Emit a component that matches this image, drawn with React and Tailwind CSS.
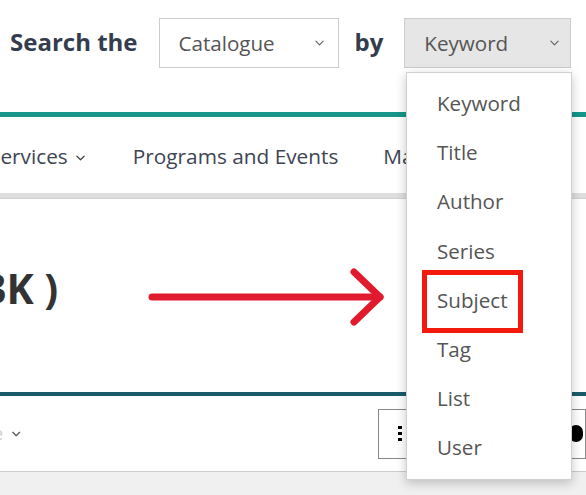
import React from 'react'

const Chevron = ({className = '', stroke = '#666', width = 1.3}) => (
    <svg className={className} viewBox="0 0 10 6" fill="none">
        <polyline points="1,1 5,5 9,1" stroke={stroke} strokeWidth={width} strokeLinecap="round" strokeLinejoin="round"/>
    </svg>
)

const options = ['Keyword', 'Title', 'Author', 'Series', 'Subject', 'Tag', 'List', 'User']

export default function App() {
    return (
        <div className="relative w-[586px] h-[495px] overflow-hidden bg-white font-['Open_Sans',sans-serif]">
            {/* Search header */}
            <div className="h-[112px] flex items-baseline pt-[18px]">
                <span className="ml-[10px] text-[24px] font-bold text-[#333d4e]">Search the</span>
                <div className="ml-[21px] w-[180px] h-[50px] border border-[#cccccc] bg-white flex items-center justify-between pl-[19px] pr-[14px] text-[20.6px] text-[#555555]">
                    <span>Catalogue</span>
                    <Chevron className="w-[9px] h-[6px]"/>
                </div>
                <span className="ml-[16px] text-[24px] font-bold text-[#333d4e]">by</span>
                <div className="ml-[21px] w-[167px] h-[50px] border border-[#cccccc] bg-[#e6e6e6] flex items-center justify-between pl-[19px] pr-[11px] text-[20.6px] text-[#555555]">
                    <span>Keyword</span>
                    <Chevron className="w-[9px] h-[6px]"/>
                </div>
            </div>

            <div className="h-[5px] bg-[#16958a]"></div>

            {/* Main nav */}
            <nav className="h-[76px] flex items-start pt-[25px] text-[20.8px] leading-[28px] text-[#3d4552] whitespace-nowrap">
                <span className="ml-[-11px]">Services</span>
                <Chevron className="ml-[8px] mt-[13px] w-[9px] h-[6px]" stroke="#444" width={1.4}/>
                <span className="ml-[48px]">Programs and Events</span>
                <span className="ml-[45px]">Makerspace</span>
            </nav>

            <div className="h-[6px] bg-[#dedede] border-b border-[#d2d2d2]"></div>

            {/* Results title */}
            <div className="h-[193px] pt-[61px]">
                <h1 className="ml-[-17px] text-[41px] leading-[56px] font-bold text-[#333333] whitespace-nowrap">3K )</h1>
            </div>

            <div className="h-[4px] bg-[#1b5b69]"></div>

            {/* Toolbar */}
            <div className="h-[76px] border-b border-[#cccccc] flex items-center">
                <span className="ml-[-7px] text-[18px] text-[#cfcfcf]">e</span>
                <Chevron className="ml-[9px] w-[12px] h-[8px]" stroke="#555" width={1.5}/>
                <div className="ml-[357px] w-[60px] h-[50px] border border-[#888888] flex flex-col justify-center gap-[3px] pl-[19px]">
                    <span className="w-[4px] h-[3px] bg-black"></span>
                    <span className="w-[4px] h-[3px] bg-black"></span>
                    <span className="w-[4px] h-[3px] bg-black"></span>
                </div>
                <div className="ml-[80px] w-[80px] h-[50px] border border-[#888888] flex items-center pl-[62px] shrink-0">
                    <span className="w-[14px] h-[17px] rounded-full bg-black"></span>
                </div>
            </div>
            <div className="h-[23px] bg-[#f0f0f0]"></div>

            {/* Annotation arrow */}
            <svg className="absolute left-[140px] top-[262px] w-[250px] h-[70px]" viewBox="140 262 250 70" fill="none">
                <line x1="152" y1="297" x2="380" y2="297" stroke="#e11b2d" strokeWidth="7" strokeLinecap="round"/>
                <polyline points="354,272 380,297 354,322" stroke="#e11b2d" strokeWidth="7" strokeLinecap="round" strokeLinejoin="round"/>
            </svg>

            {/* Open select menu */}
            <ul className="absolute left-[406px] top-[72px] w-[166px] h-[408px] bg-white border border-[#d0d0d0] pt-[6px] shadow-[0_3px_10px_rgba(0,0,0,0.22)]">
                {options.map(o => (
                    <li key={o} className="h-[49.2px] leading-[49.2px] pl-[30px] text-[20.6px] text-[#555555]">{o}</li>
                ))}
            </ul>

            {/* Highlight box */}
            <div className="absolute left-[422px] top-[270px] w-[101px] h-[63px] border-[5px] border-[#f21a0d]"></div>
        </div>
    )
}
